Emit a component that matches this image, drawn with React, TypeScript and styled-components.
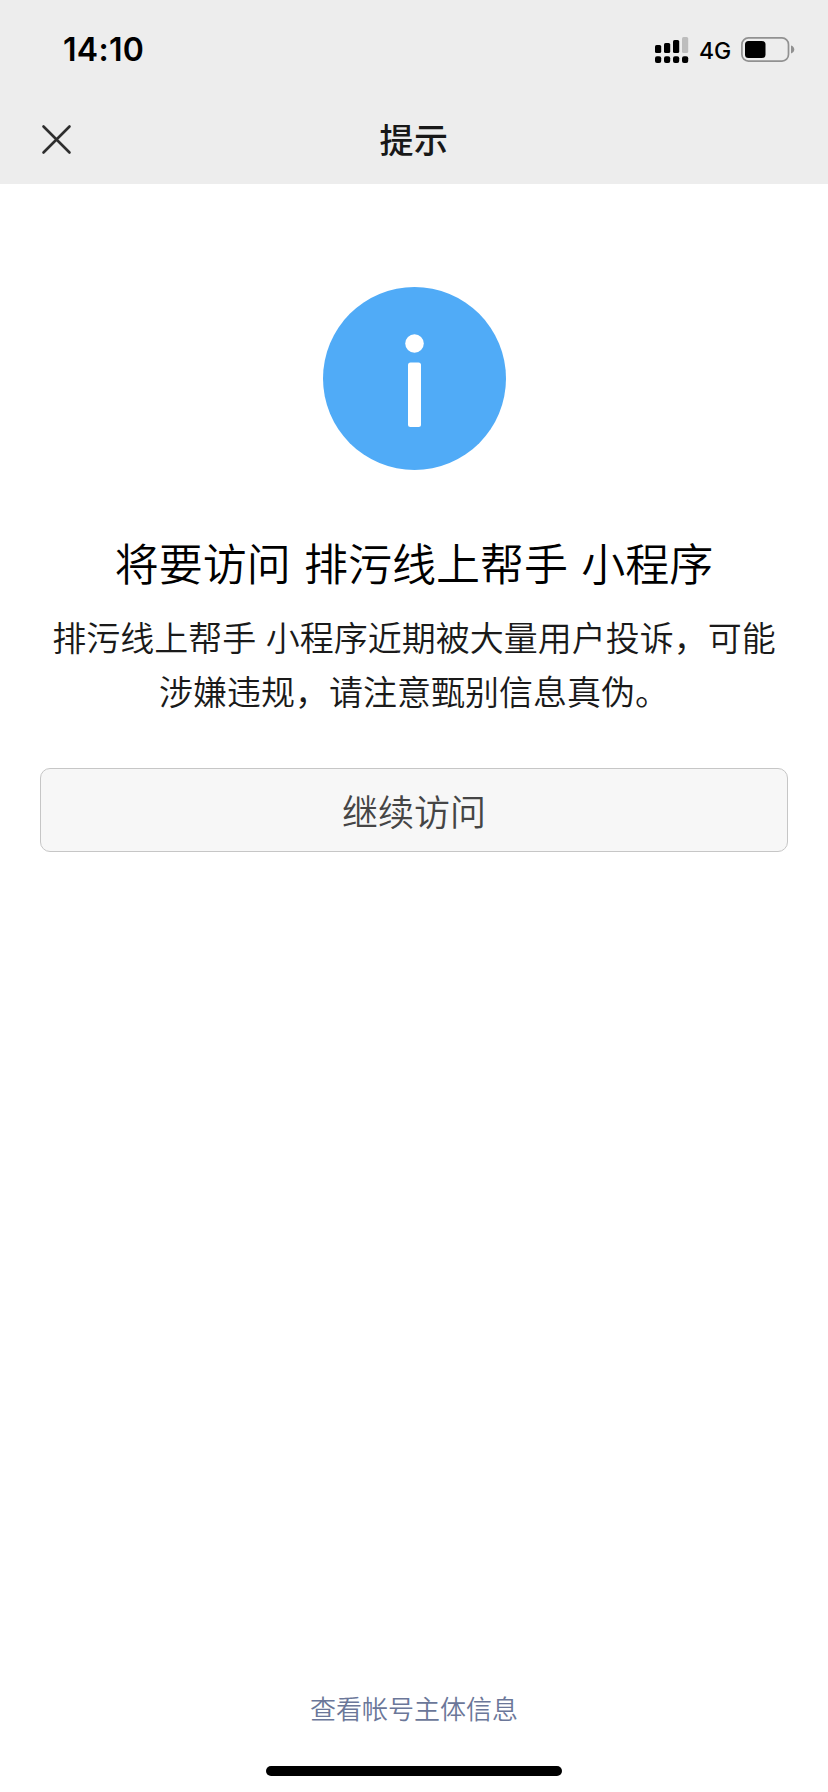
import React from "react";
import styled, { createGlobalStyle } from "styled-components";

const GlobalStyle = createGlobalStyle`
  html, body { margin: 0; padding: 0; background: #fff; }
  * { box-sizing: border-box; }
`;

const Screen = styled.div`
  width: 828px;
  height: 1792px;
  display: flex;
  flex-direction: column;
  background: #fff;
  font-family: "Noto Sans CJK SC", sans-serif;
  font-weight: 350;
`;

const Header = styled.header`
  height: 184px;
  flex: none;
  background: #ededed;
`;

const StatusBar = styled.div`
  height: 96px;
  padding: 4px 33px 0 63px;
  display: flex;
  align-items: center;
  justify-content: space-between;
  font-family: Inter, sans-serif;
  color: #000;
`;

const Time = styled.span`
  font-size: 32px;
  font-weight: 600;
  line-height: 40px;
  letter-spacing: 0.3px;
`;

const StatusIcons = styled.div`
  display: flex;
  align-items: center;
  height: 40px;

  svg { display: block; }
`;

const Network = styled.span`
  width: 32px;
  margin: 0 10px;
  font-size: 23px;
  font-weight: 500;
  line-height: 40px;
  padding-top: 1px;
  white-space: nowrap;
`;

const NavBar = styled.div`
  height: 88px;
  padding: 0 40px;
  display: grid;
  grid-template-columns: 34px 1fr 34px;
  align-items: center;
`;

const CloseButton = styled.button`
  width: 34px;
  height: 34px;
  padding: 0;
  border: 0;
  background: none;

  svg { display: block; }
`;

const Title = styled.h1`
  margin: 0 0 2px;
  text-align: center;
  font-size: 34px;
  font-weight: 500;
  line-height: 50px;
  letter-spacing: 0.6px;
  color: #181818;
`;

const Content = styled.main`
  flex: 1;
  padding: 103px 40px 0;
  display: flex;
  flex-direction: column;
  align-items: center;
`;

const InfoIcon = styled.svg`
  display: block;
  width: 183px;
  height: 183px;
`;

const Heading = styled.h2`
  margin: 60px 0 0;
  font-size: 44px;
  font-weight: 350;
  line-height: 64px;
  word-spacing: 3.5px;
  white-space: nowrap;
  color: #000;
`;

const Description = styled.p`
  margin: 16px 0 0;
  text-align: center;
  font-size: 34px;
  line-height: 54px;
  word-spacing: 2px;
  white-space: nowrap;
  color: #1a1a1a;
`;

const ContinueButton = styled.button`
  width: 748px;
  height: 84px;
  margin-top: 50px;
  padding: 0;
  border: 1px solid #c6c6c6;
  border-radius: 10px;
  background: #f7f7f7;
  font-family: inherit;
  font-size: 36px;
  font-weight: inherit;
  line-height: 82px;
  color: #454545;
`;

const Footer = styled.footer`
  display: flex;
  flex-direction: column;
  align-items: center;
  padding-bottom: 16px;
`;

const AccountLink = styled.a`
  font-size: 26px;
  line-height: 40px;
  color: #6b7799;
`;

const HomeIndicator = styled.div`
  width: 296px;
  height: 10px;
  margin-top: 38px;
  border-radius: 5px;
  background: #000;
`;

const bars = [
  { x: 0, y: 8, color: "#000" },
  { x: 9, y: 6, color: "#000" },
  { x: 18, y: 3, color: "#000" },
  { x: 27, y: 0, color: "#bdbdbd" },
];

function SignalIcon() {
  return (
    <svg width="34" height="26" viewBox="0 0 34 26">
      {bars.map((b) => (
        <g key={b.x}>
          <rect x={b.x} y={b.y} width="6.2" height={16 - b.y} rx="1.6" fill={b.color} />
          <rect x={b.x} y="19.200" width="6.2" height="6.8" rx="2" fill="#000" />
        </g>
      ))}
    </svg>
  );
}

function BatteryIcon() {
  return (
    <svg width="54" height="26" viewBox="0 0 54 26">
      <rect x="0.9" y="0.9" width="46.6" height="23.2" rx="6.5" fill="none" stroke="#919191" strokeWidth="1.7" />
      <rect x="4" y="4" width="20.5" height="17" rx="3.5" fill="#000" />
      <path d="M50 8.5c2 .6 3.3 2.200 3.300 4s-1.300 3.400-3.300 4z" fill="#919191" />
    </svg>
  );
}

export default function App() {
  return (
    <>
      <GlobalStyle />
      <Screen>
        <Header>
          <StatusBar>
            <Time>14:10</Time>
            <StatusIcons>
              <SignalIcon />
              <Network>4G</Network>
              <BatteryIcon />
            </StatusIcons>
          </StatusBar>
          <NavBar>
            <CloseButton aria-label="关闭">
              <svg width="34" height="34" viewBox="0 0 34 34">
                <path d="M3.500 3.500L29.500 29.500M29.500 3.500L3.500 29.500" stroke="#2e2e2e" strokeWidth="2.600" strokeLinecap="round" />
              </svg>
            </CloseButton>
            <Title>提示</Title>
          </NavBar>
        </Header>
        <Content>
          <InfoIcon viewBox="0 0 183 183">
            <circle cx="91.500" cy="91.500" r="91.500" fill="#50abf7" />
            <circle cx="91.500" cy="56.500" r="9.300" fill="#fff" />
            <rect x="85" y="75.500" width="13" height="64.500" rx="2.500" fill="#fff" />
          </InfoIcon>
          <Heading>将要访问 排污线上帮手 小程序</Heading>
          <Description>
            排污线上帮手 小程序近期被大量用户投诉，可能
            <br />
            涉嫌违规，请注意甄别信息真伪。
          </Description>
          <ContinueButton>继续访问</ContinueButton>
        </Content>
        <Footer>
          <AccountLink>查看帐号主体信息</AccountLink>
          <HomeIndicator />
        </Footer>
      </Screen>
    </>
  );
}
